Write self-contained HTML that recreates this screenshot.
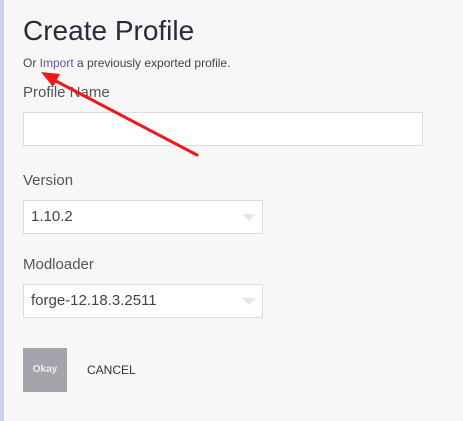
<!DOCTYPE html>
<html><head><style>
body{margin:0;width:463px;height:421px;background:#f7f7f7;font-family:"Liberation Sans",sans-serif;position:relative;overflow:hidden}
.bar{position:absolute;left:0;top:0;width:4px;height:421px;background:#c9d2e6}
.a{position:absolute;white-space:nowrap}
.box{position:absolute;background:#fff;border:1px solid #dcdcdc;box-sizing:border-box}
.tri{position:absolute;width:0;height:0;border-left:7px solid transparent;border-right:7px solid transparent;border-top:7px solid #e6e6e6}
</style></head><body>
<div class="bar"></div>
<div class="a" style="left:23px;top:15px;font-size:28px;color:#2a2a3a">Create Profile</div>
<div class="a" style="left:23px;top:56px;font-size:12px;color:#444">Or <span style="color:#6b4fb0">Import</span> a previously exported profile.</div>
<div class="a" style="left:23px;top:84px;font-size:15px;color:#555">Profile Name</div>
<div class="box" style="left:23px;top:112px;width:400px;height:34px"></div>
<div class="a" style="left:23px;top:172px;font-size:15px;color:#555">Version</div>
<div class="box" style="left:23px;top:200px;width:240px;height:34px"></div>
<div class="a" style="left:31px;top:208px;font-size:15px;color:#444">1.10.2</div>
<div class="tri" style="left:242px;top:214px"></div>
<div class="a" style="left:23px;top:256px;font-size:15px;color:#555">Modloader</div>
<div class="box" style="left:23px;top:284px;width:240px;height:34px"></div>
<div class="a" style="left:31px;top:292px;font-size:15px;color:#444">forge-12.18.3.2511</div>
<div class="tri" style="left:242px;top:298px"></div>
<div class="a" style="left:23px;top:348px;width:44px;height:44px;background:#a6a3ad;color:#eee;font-size:10px;font-weight:bold;text-align:center;line-height:44px">Okay</div>
<div class="a" style="left:87px;top:363px;font-size:12px;color:#333">CANCEL</div>
<svg style="position:absolute;left:0;top:0" width="463" height="421">
<line x1="197" y1="155" x2="52" y2="79" stroke="#f01818" stroke-width="3" stroke-linecap="round"/>
<polygon points="41,72 60,74 53,87" fill="#f01818"/>
</svg>
</body></html>
